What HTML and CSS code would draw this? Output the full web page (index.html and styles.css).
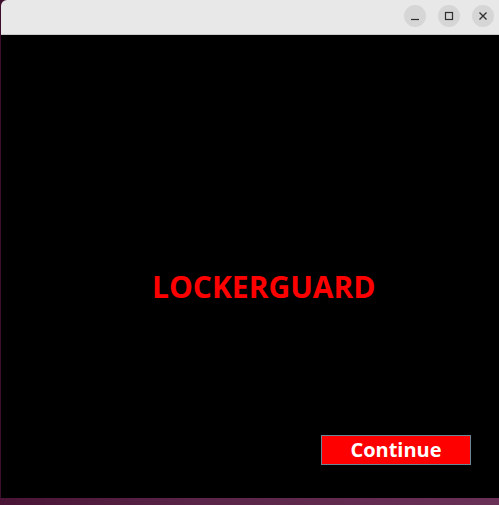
FILE: index.html
```html
<!DOCTYPE html>
<html>
<head>
<meta charset="utf-8">
<link rel="stylesheet" href="styles.css">
</head>
<body>
<div class="window">
  <div class="titlebar">
    <div class="controls">
      <span class="ctl"><svg width="10" height="10" viewBox="0 0 10 10"><path d="M1 8.5h8" stroke="#2e2e2e" stroke-width="1.2"/></svg></span>
      <span class="ctl"><svg width="10" height="10" viewBox="0 0 10 10"><rect x="1.5" y="1.5" width="7" height="7" fill="none" stroke="#2e2e2e" stroke-width="1.2"/></svg></span>
      <span class="ctl"><svg width="10" height="10" viewBox="0 0 10 10"><path d="M1.5 1.5l7 7M8.5 1.5l-7 7" stroke="#2e2e2e" stroke-width="1.3"/></svg></span>
    </div>
  </div>
  <div class="content">
    <div class="brand">LOCKERGUARD</div>
    <div class="actions">
      <button class="continue">Continue</button>
    </div>
  </div>
</div>
<div class="desktop"></div>
</body>
</html>
```
FILE: styles.css
```css
html, body {
  margin: 0;
  padding: 0;
}
body {
  width: 499px;
  height: 505px;
  background: #3d0f2c;
  overflow: hidden;
  font-family: "Open Sans", "Liberation Sans", sans-serif;
}
.window {
  margin-left: 1px;
  display: flex;
  flex-direction: column;
}
.titlebar {
  height: 34px;
  background: #e8e8e8;
  border-bottom: 1px solid #c9c9c9;
  border-top-left-radius: 6px;
  display: flex;
  justify-content: flex-end;
  align-items: center;
}
.controls {
  display: flex;
  gap: 12px;
  margin-right: 5px;
  margin-top: -2px;
}
.ctl {
  width: 22px;
  height: 22px;
  border-radius: 50%;
  background: #d6d6d6;
  display: flex;
  align-items: center;
  justify-content: center;
}
.content {
  height: 463px;
  background: #000;
  display: flex;
  flex-direction: column;
}
.brand {
  margin-top: 231px;
  padding-left: 151px;
  color: #ff0000;
  font-weight: 700;
  font-size: 30px;
  line-height: 41px;
  letter-spacing: 0;
}
.actions {
  margin-top: 128px;
  display: flex;
  justify-content: flex-end;
  padding-right: 28px;
}
.continue {
  width: 150px;
  height: 30px;
  background: #ff0000;
  border: 1px solid #6b8796;
  color: #fff;
  font-family: "Open Sans", "Liberation Sans", sans-serif;
  font-weight: 700;
  font-size: 20px;
  line-height: 26px;
  padding: 0;
  display: flex;
  align-items: center;
  justify-content: center;
}
.desktop {
  height: 7px;
  background: linear-gradient(90deg, #4a1436 0%, #5a2548 40%, #6a3156 100%);
}
```
